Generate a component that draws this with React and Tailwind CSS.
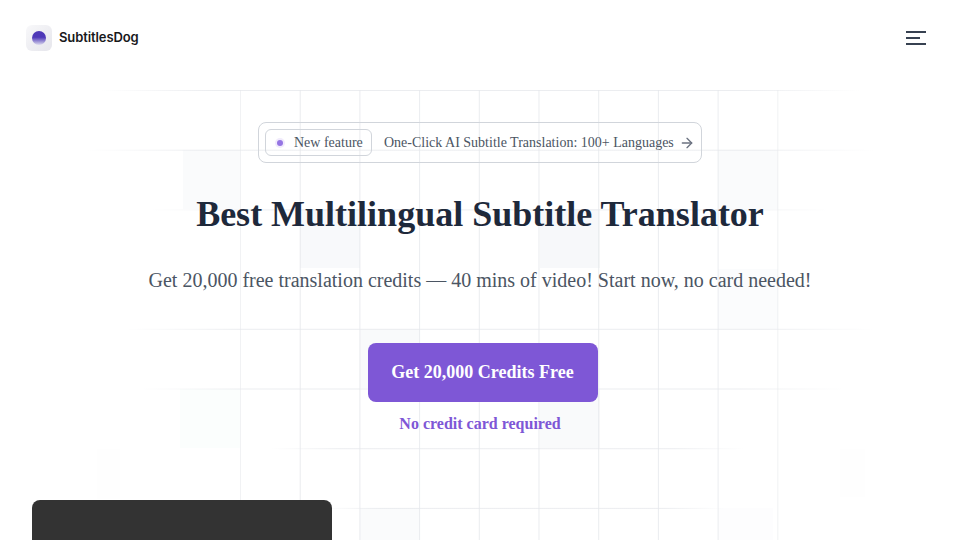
import { ArrowRight } from "lucide-react";

const step = 59.7;
const cols = [0, 1, 2, 3, 4, 5, 6, 7, 8, 9];

// start / end of each horizontal grid line, they fade out towards the edges
const rows = [
  { y: 90, x1: 100, x2: 860 },
  { y: 149.7, x1: 85, x2: 875 },
  { y: 209.4, x1: 150, x2: 830 },
  { y: 328.8, x1: 125, x2: 875 },
  { y: 388.5, x1: 140, x2: 845 },
  { y: 448.2, x1: 270, x2: 745 },
  { y: 507.9, x1: 320, x2: 725 },
];

const cells = [
  { x: 183, y: 150, w: 57, h: 59, fill: "#fafbfc" },
  { x: 300, y: 209, w: 60, h: 59, fill: "#f8f9fb" },
  { x: 540, y: 209, w: 60, h: 59, fill: "#f7f8fa" },
  { x: 718, y: 150, w: 60, h: 59, fill: "#fafbfc" },
  { x: 718, y: 269, w: 60, h: 60, fill: "#fbfcfd" },
  { x: 360, y: 329, w: 60, h: 59, fill: "#f9fafb" },
  { x: 180, y: 389, w: 60, h: 59, fill: "#fbfefd" },
  { x: 540, y: 389, w: 60, h: 59, fill: "#f9fafb" },
  { x: 360, y: 508, w: 60, h: 32, fill: "#fafbfc" },
  { x: 718, y: 508, w: 55, h: 32, fill: "#fdfdfe" },
  { x: 97, y: 449, w: 23, h: 50, fill: "#fefefe" },
  { x: 840, y: 449, w: 25, h: 48, fill: "#fefefe" },
];

function GridBackdrop() {
  return (
    <svg className="absolute inset-0 w-full h-full pointer-events-none" viewBox="0 0 960 540">
      <defs>
        <linearGradient id="rowFade" x1="0" x2="1" y1="0" y2="0">
          <stop offset="0" stopColor="#e5e7eb" stopOpacity="0" />
          <stop offset="0.15" stopColor="#e5e7eb" stopOpacity="0.75" />
          <stop offset="0.85" stopColor="#e5e7eb" stopOpacity="0.75" />
          <stop offset="1" stopColor="#e5e7eb" stopOpacity="0" />
        </linearGradient>
      </defs>
      {cells.map((c) => (
        <rect key={`${c.x}-${c.y}`} x={c.x} y={c.y} width={c.w} height={c.h} fill={c.fill} />
      ))}
      {cols.map((i) => (
        <line
          key={i}
          x1={240.5 + i * step}
          x2={240.5 + i * step}
          y1="90"
          y2="540"
          stroke="#e5e7eb"
          strokeOpacity={i === 0 || i === 9 ? 0.55 : 0.8}
        />
      ))}
      {rows.map((r) => (
        <rect key={r.y} x={r.x1} y={r.y} width={r.x2 - r.x1} height="1" fill="url(#rowFade)" />
      ))}
    </svg>
  );
}

function Logo() {
  return (
    <div className="flex items-center gap-[7px]">
      <div className="w-[26px] h-[26px] rounded-md bg-linear-to-br from-[#f8f8fa] to-[#e6e6ec] flex items-center justify-center">
        <div className="w-[14px] h-[14px] rounded-full bg-linear-to-b from-[#4e38b8] from-45% to-[#8f7fe0]/15 blur-[0.6px]" />
      </div>
      <span className="text-[13px] tracking-[-0.1px] font-semibold text-[#18181b] font-['Inter',sans-serif]">SubtitlesDog</span>
    </div>
  );
}

function MenuIcon() {
  return (
    <button className="flex flex-col gap-[4px] w-[20px]">
      <span className="h-[2px] w-[20px] bg-[#374151]" />
      <span className="h-[2px] w-[14px] bg-[#374151]" />
      <span className="h-[2px] w-[20px] bg-[#374151]" />
    </button>
  );
}

export default function App() {
  return (
    <div className="relative w-[960px] h-[540px] overflow-hidden bg-white font-['Liberation_Serif',serif]">
      <GridBackdrop />

      <div className="relative flex flex-col h-full">
        <header className="flex items-center justify-between shrink-0 h-[75px] pl-[26px] pr-[34px]">
          <Logo />
          <MenuIcon />
        </header>

        <main className="flex flex-col items-center shrink-0">
          <div className="mt-[47px] flex items-center h-[41px] w-[444px] pl-[6px] pr-[7px] border border-[#d1d5db] rounded-lg text-sm text-[#4b5563]">
            <div className="flex items-center h-[27px] w-[107px] pl-[9px] border border-[#d1d5db] rounded-md">
              <span className="w-[10px] h-[10px] rounded-full bg-[#f1ebfc] flex items-center justify-center">
                <span className="w-[6px] h-[6px] rounded-full bg-[#9575e3]" />
              </span>
              <span className="ml-[9px]">New feature</span>
            </div>
            <span className="ml-3">One-Click AI Subtitle Translation: 100+ Languages</span>
            <ArrowRight className="ml-auto -mr-[1px] text-[#6b7280]" size={16} />
          </div>

          <h1 className="mt-[28px] text-[36px] leading-[46px] font-bold text-[#1e293b]">
            Best Multilingual Subtitle Translator
          </h1>

          <p className="mt-[29px] text-xl leading-7 text-[#4b5563]">
            Get 20,000 free translation credits — 40 mins of video! Start now, no card needed!
          </p>

          <button className="mt-[49px] ml-[5px] w-[230px] h-[59px] pb-[2px] rounded-lg bg-[#7e57d6] text-lg font-bold text-white">
            Get 20,000 Credits Free
          </button>
          <p className="mt-[10px] text-base leading-6 font-bold text-[#7e57d6]">No credit card required</p>

          <div className="self-start ml-[32px] mt-[64px] w-[300px] h-[60px] shrink-0 rounded-t-lg bg-[#333333]" />
        </main>
      </div>
    </div>
  );
}
